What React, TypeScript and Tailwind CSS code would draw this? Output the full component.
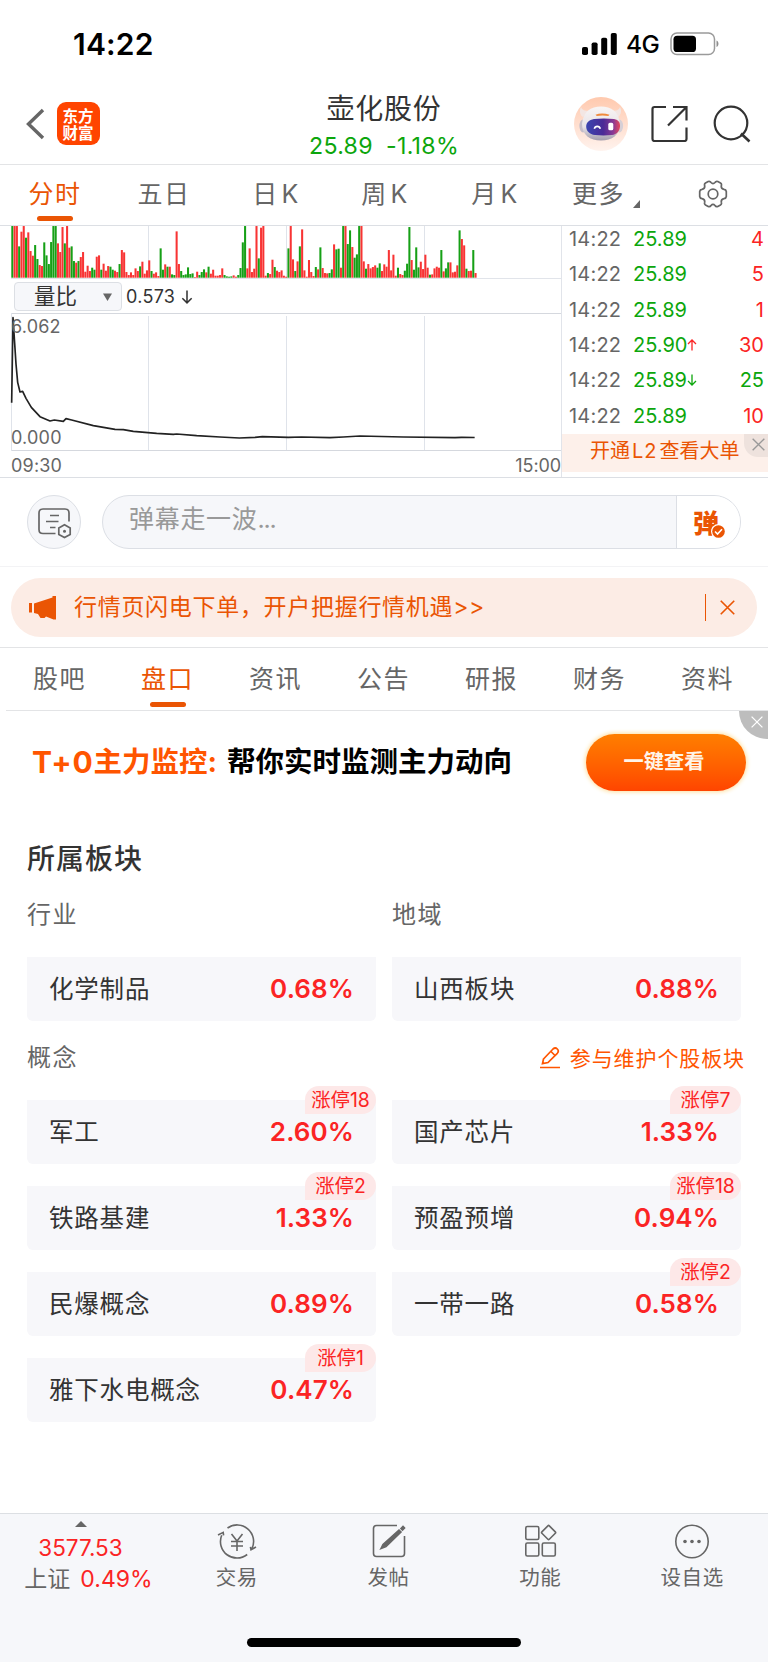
import { ReactNode } from "react";
import clsx from "clsx";

// minute volume bars: positive = up (red), negative = down (green)
const VOLUME = [
  -155, 155, 155, -94, 138, 155, -120, 136, 80, 66, -98, -56, 38, 35, -106, -67, -41, -107, -155, -155,
  103, 77, 152, -103, 155, 90, -94, -50, 45, -50, 62, 77, 18, 36, 20, -30, -24, 63, 67, -24,
  42, 21, 35, -33, -24, 21, 17, -41, 83, 76, 17, 8, 16, 8, 28, 20, -34, 48, 12, 22,
  52, -20, 12, 16, 5, -88, -24, 40, -33, 33, -10, -8, 139, 41, -20, -8, -10, -31, -11, -13,
  2, 18, -8, -17, -25, 16, -33, 12, 24, 6, 6, 8, 28, -8, -4, -3, -4, 7, 3, -8,
  -29, -106, -155, 28, 88, 17, 27, 155, -58, 150, 155, 6, -14, 11, 54, -32, 21, 17, 22, 6,
  3, -88, 155, 55, -20, 49, -94, 145, 22, 3, 53, 17, 5, -32, 25, -91, 29, 14, 13, -14,
  -25, 100, -85, -87, 30, -155, 155, -101, -142, 92, -60, -70, -155, 155, 49, -27, 41, 28, 32, 37,
  -30, -43, 20, 40, 33, 83, 22, 69, 6, -30, 11, 8, -21, -42, -152, 53, -24, -91, -31, 48,
  26, 69, 30, -9, 10, 28, 33, 30, -83, 19, -28, -46, 46, 16, 18, 37, -142, 116, 97, -27,
  20, 21, -83, 14,
];

const RATIO_LINE =
  "35,548 39,293 44,370 48,432 53,487 60,516 68,514 78,535 94,562 120,590 150,603 163,600 190,604 198,596 215,600 280,617 345,628 370,629 400,634 470,640 520,643 530,642 590,647 660,651 718,654 765,652 787,650 865,652 905,651 990,653 1030,651 1080,648 1210,651 1365,653 1385,652 1424,652.5";

const TRADES = [
  { price: "25.89", vol: "4", up: true },
  { price: "25.89", vol: "5", up: true },
  { price: "25.89", vol: "1", up: true },
  { price: "25.90", dir: "up", vol: "30", up: true },
  { price: "25.89", dir: "down", vol: "25", up: false },
  { price: "25.89", vol: "10", up: true },
];

const CONCEPTS = [
  { name: "军工", value: "2.60%", tag: "涨停18" },
  { name: "国产芯片", value: "1.33%", tag: "涨停7" },
  { name: "铁路基建", value: "1.33%", tag: "涨停2" },
  { name: "预盈预增", value: "0.94%", tag: "涨停18" },
  { name: "民爆概念", value: "0.89%" },
  { name: "一带一路", value: "0.58%", tag: "涨停2" },
  { name: "雅下水电概念", value: "0.47%", tag: "涨停1" },
];

const INFO_TABS = ["股吧", "盘口", "资讯", "公告", "研报", "财务", "资料"];

function Arrow({ up, className }: { up?: boolean; className?: string }) {
  return (
    <svg viewBox="0 0 10 12" fill="none" stroke="currentColor" strokeWidth="1.3" className={className}>
      {up ? <path d="M5 11.5V1M1 5l4-4 4 4" /> : <path d="M5 .5V11M1 7l4 4 4-4" />}
    </svg>
  );
}

function Cross({ className, width = 1.5 }: { className?: string; width?: number }) {
  return (
    <svg viewBox="0 0 14 14" fill="none" stroke="currentColor" strokeWidth={width} className={className}>
      <path d="M.7.7l12.6 12.6M13.3.7L.7 13.3" />
    </svg>
  );
}

function StatusBar() {
  return (
    <div className="flex h-[84px] items-center justify-between pl-[73px] pr-[48px] pt-[4px] text-black">
      <span className="text-[30px] font-semibold leading-none tracking-[0.2px]">14:22</span>
      <div className="flex items-center">
        <svg width="36" height="22" viewBox="0 0 36 22">
          <rect x="0" y="14" width="6" height="8" rx="1.8" />
          <rect x="9.6" y="9.5" width="6" height="12.5" rx="1.8" />
          <rect x="19.2" y="4.8" width="6" height="17.2" rx="1.8" />
          <rect x="28.8" y="0" width="6" height="22" rx="1.8" />
        </svg>
        <span className="ml-[8px] w-[37px] text-[24.5px] font-medium leading-none tracking-[-0.5px]">4G</span>
        <svg width="50" height="24" viewBox="0 0 50 24" className="ml-[7px]">
          <rect x="1" y="1" width="43.5" height="21.5" rx="6" fill="none" stroke="#9a9a9a" strokeWidth="1.5" />
          <rect x="3.5" y="3.7" width="22.5" height="16.3" rx="3.6" />
          <path d="M46.5 8.5c2.6.8 2.6 5.6 0 6.4z" fill="#8e8e8e" />
        </svg>
      </div>
    </div>
  );
}

function Robot() {
  return (
    <svg width="54" height="54" viewBox="0 0 54 54">
      <defs>
        <linearGradient id="halo" x1="0" y1="0" x2="0" y2="1">
          <stop offset="0" stopColor="#ffc9ae" />
          <stop offset="1" stopColor="#fff3ee" />
        </linearGradient>
        <linearGradient id="shell" x1="0" y1="0" x2="0" y2="1">
          <stop offset="0" stopColor="#f8f5f5" />
          <stop offset=".6" stopColor="#e8e3e7" />
          <stop offset="1" stopColor="#a39dad" />
        </linearGradient>
        <linearGradient id="visor" x1="0" y1="0" x2="1" y2="0">
          <stop offset="0" stopColor="#3a45b0" />
          <stop offset=".5" stopColor="#4a2a96" />
          <stop offset=".8" stopColor="#8a3a94" />
          <stop offset="1" stopColor="#e8485a" />
        </linearGradient>
      </defs>
      <circle cx="27" cy="27" r="27" fill="url(#halo)" />
      <ellipse cx="9" cy="29" rx="3.6" ry="6.5" fill="#c4bdc9" />
      <ellipse cx="45.5" cy="29" rx="3.6" ry="6.5" fill="#d6cfd6" />
      <path d="M7 10c-2 4-1 8 2 10l6-6c-4 0-7-1-8-4zM46 10c2 4 1 8-2 10l-6-6c4 0 7-1 8-4z" fill="#f3e6e3" />
      <path d="M27 9.5c10 0 18 5 19 17.5 0 11-8 16.500-19 16.500S8 38 8 27C9 14.500 17 9.500 27 9.500z" fill="url(#shell)" />
      <path d="M21.500 17.800c4-1.600 9-1.600 14 0l-1.200 1.300c-3.500-.8-8-.8-11.500 0z" fill="#f08a3c" />
      <path d="M20 22c6-.8 14-.8 20 0 5 1 6.300 4 6 7.500-.4 4.800-3 7.800-8 8.500-5 .6-12 .6-17 0-5.500-.7-8.500-3.800-8.800-8C12 25.500 15 22.900 20 22z" fill="url(#visor)" />
      <path d="M20.300 31.800c.8-3.200 5.200-3.200 6 0" fill="none" stroke="#fff" strokeWidth="1.6" />
      <rect x="34.3" y="25.8" width="5" height="7.5" rx="1.6" fill="#fff" />
    </svg>
  );
}

function Header() {
  return (
    <div className="relative flex h-[81px] items-center justify-between border-b border-[#e3e4e6]">
      <div className="flex items-center pb-px pl-[26px]">
        <svg width="19" height="32" viewBox="0 0 19 32" fill="none" stroke="#666" strokeWidth="3.4">
          <path d="M17 2L2.500 16 17 30" />
        </svg>
        <div className="ml-[12px] flex h-[43px] w-[43px] items-center justify-center rounded-[9px] bg-[#ff4400]">
          <span className="w-[32px] break-all font-['Noto_Sans_CJK_SC'] text-[15.5px] font-bold leading-[17px] text-white">东方财富</span>
        </div>
      </div>
      <div className="absolute inset-x-0 top-[9px] flex flex-col items-center">
        <div className="text-[28px] leading-[32px] tracking-[0.8px] text-[#333]">壶化股份</div>
        <div className="mt-[9px] flex gap-[13px] text-[23.2px] leading-[24px] tracking-[0.3px] text-[#0ca60c]">
          <span>25.89</span>
          <span>-1.18%</span>
        </div>
      </div>
      <div className="flex items-center pb-px pr-[17px]">
        <Robot />
        <svg width="37" height="37" viewBox="0 0 37 37" fill="none" stroke="#333" strokeWidth="2.2" className="ml-[23px]">
          <path d="M15 2H3.500Q1.500 2 1.500 4v30q0 2 2 2h30q2 0 2-2V22.500M22 2h13.500v13.500M35 2.500L17 20.500" />
        </svg>
        <svg width="38" height="38" viewBox="0 0 38 38" fill="none" stroke="#333" strokeWidth="2.2" className="ml-[25px]">
          <circle cx="18" cy="18" r="16.3" />
          <path d="M28 28.500l8.500 8" strokeWidth="2.6" />
        </svg>
      </div>
    </div>
  );
}

function PeriodTab({ width, active, children }: { width: string; active?: boolean; children: ReactNode }) {
  return (
    <div className={clsx("relative flex items-center justify-center pb-px", width, active && "text-[#ea5504]")}>
      {children}
      {active && <div className="absolute bottom-[4px] left-1/2 h-[5px] w-[36px] -translate-x-1/2 rounded-full bg-[#ea5504]" />}
    </div>
  );
}

function PeriodTabs() {
  return (
    <div className="flex h-[60px] whitespace-nowrap text-[25px] tracking-[1.4px] text-[#666]">
      <PeriodTab width="w-[110px]" active>分时</PeriodTab>
      <PeriodTab width="w-[108px]">五日</PeriodTab>
      <PeriodTab width="w-[116px]">日<span className="ml-[3px]">K</span></PeriodTab>
      <PeriodTab width="w-[102px]">周<span className="ml-[3px]">K</span></PeriodTab>
      <PeriodTab width="w-[118px]">月<span className="ml-[3px]">K</span></PeriodTab>
      <PeriodTab width="w-[104px]">
        更多
        <svg width="7" height="8" viewBox="0 0 7 8" className="ml-[8px] mt-[18px]">
          <path d="M7 0v8H0z" fill="#666" />
        </svg>
      </PeriodTab>
      <div className="flex flex-1 items-center justify-center pb-[3px]">
        <svg width="30" height="28" viewBox="0 0 30 28" fill="none" stroke="#666" strokeWidth="1.7" strokeLinejoin="round">
          <path d="M10.200 1.500Q12 .8 13 2.500 15 4.600 17 2.500 18 .8 19.800 1.500L22.500 3Q24 4 23.300 5.800 23 8.800 26 9.300 28 9.500 28.300 11.500V16.500Q28 18.500 26 18.700 23 19.200 23.300 22.200 24 24 22.500 25L19.800 26.500Q18 27.200 17 25.500 15 23.400 13 25.500 12 27.200 10.200 26.500L7.500 25Q6 24 6.700 22.200 7 19.200 4 18.700 2 18.500 1.700 16.500V11.500Q2 9.500 4 9.300 7 8.800 6.700 5.800 6 4 7.500 3Z" />
          <circle cx="15" cy="14" r="4.8" />
        </svg>
      </div>
    </div>
  );
}

function Charts() {
  return (
    <div className="flex w-[562px] shrink-0 flex-col border-r border-[#e1e4ea]">
      <svg width="561" height="53" viewBox="0 0 561 53" className="block shrink-0">
        <path d="M148.500 0v53M286.500 0v53M424.500 0v53" stroke="#dfe3ea" />
        {VOLUME.map((v, i) => (
          <rect
            key={i}
            x={11.3 + i * 2.282}
            y={51.7 - Math.abs(v) / 3}
            width="2.05"
            height={Math.abs(v) / 3}
            fill={v > 0 ? "#f83434" : "#16a016"}
          />
        ))}
        <path d="M11 52.500h550" stroke="#e1e4ea" />
      </svg>
      <div className="flex h-[34px] shrink-0 items-center pl-[14px] pt-px text-[#333]">
        <div className="flex h-[29px] w-[108px] items-center justify-between rounded-[4px] border border-[#dcdfe4] bg-[#f6f7fa] pl-[19px] pr-[9px]">
          <span className="text-[21.5px] leading-none">量比</span>
          <svg width="9" height="8" viewBox="0 0 9 8">
            <path d="M0 .5h9L4.500 8z" fill="#666" />
          </svg>
        </div>
        <span className="ml-[4px] text-[18px] leading-none tracking-[0.3px]">0.573</span>
        <Arrow className="ml-[6px] h-[14px] w-[12px]" />
      </div>
      <div className="relative h-[139px] shrink-0">
        <svg width="561" height="139" viewBox="0 0 561 139" className="block" fill="none">
          <path d="M11 .5h550M11 137.500h550" stroke="#d5d8de" />
          <path d="M11.500 0v138M148.500 3v134M286.500 3v134M424.500 3v134" stroke="#dfe3ea" />
          <polyline points={RATIO_LINE} transform="translate(0 -93) scale(.33333)" stroke="#222" strokeWidth="5" strokeLinejoin="round" />
        </svg>
        <span className="absolute left-[11px] top-[4px] text-[18px] leading-[20px] tracking-[0.2px] text-[#666]">6.062</span>
        <span className="absolute left-[11px] top-[115px] text-[18px] leading-[20px] tracking-[0.2px] text-[#666]">0.000</span>
      </div>
      <div className="flex h-[25px] items-center justify-between pl-[11px] pt-[2px] text-[18px] leading-none tracking-[0.2px] text-[#666]">
        <span>09:30</span>
        <span className="tracking-[-0.1px]">15:00</span>
      </div>
    </div>
  );
}

function TradeList() {
  return (
    <div className="flex flex-1 flex-col">
      <div className="h-[208px] overflow-hidden pl-[7px] pr-[4px]">
        {TRADES.map((t, i) => (
          <div key={i} className="flex h-[35.3px] items-center pb-[9px] text-[20px] leading-none text-[#0ca60c]">
            <span className="w-[64px] tracking-[0.2px] text-[#666]">14:22</span>
            <span className="w-[54px]">{t.price}</span>
            {t.dir && <Arrow up={t.dir === "up"} className={clsx("h-[12px] w-[10px]", t.dir === "up" && "text-[#fb2424]")} />}
            <span className={clsx("ml-auto", t.up && "text-[#fb2424]")}>{t.vol}</span>
          </div>
        ))}
      </div>
      <div className="relative h-[38px] bg-[#fdf0ea] pl-[28px] text-[20px] leading-[34px] text-[#ea5504]">
        开通<span className="mx-[2px] tracking-[1px]">L2</span>查看大单
        <div className="absolute right-0 top-0 flex h-[23px] w-[24px] items-center justify-center rounded-bl-[14px] bg-[#eee2dd] pb-[3px] pl-[4px]">
          <Cross className="h-[13px] w-[13px] text-[#999]" />
        </div>
      </div>
    </div>
  );
}

function DanmuBar() {
  return (
    <div className="flex h-[89px] items-center border-b border-[#f3f3f5] pl-[27px] pr-[27px]">
      <div className="flex h-[54px] w-[54px] items-center justify-center rounded-full border border-[#dcdfe5] bg-[#f6f7fa]">
        <svg width="34" height="31" viewBox="0 0 34 31" fill="none" stroke="#666" strokeWidth="1.7" className="ml-[2px] mt-[3px]">
          <path d="M17.500 25.500H5Q1 25.500 1 21.500V5Q1 1 5 1H27Q31 1 31 5V13.500M12 7.500h9M8 13.500h12.500M12 19.500h5.500" />
          <path d="M26.500 16.800l5.700 3.200v6.400l-5.700 3.200-5.700-3.200V20z" />
          <circle cx="26.5" cy="23.2" r="1.5" fill="#666" stroke="none" />
        </svg>
      </div>
      <div className="ml-[21px] flex h-[54px] flex-1 overflow-hidden rounded-full border border-[#dcdfe5] bg-[#f6f7fa]">
        <span className="flex-1 pl-[26px] text-[25px] leading-[47px] tracking-[0.7px] text-[#999]">
          弹幕走一波<span className="tracking-[-1.2px]">...</span>
        </span>
        <div className="relative flex w-[64px] items-center border-l border-[#dcdfe5] bg-white pl-[16px]">
          <span className="font-['Noto_Sans_CJK_SC'] text-[26px] font-black leading-none text-[#ea5504]">弹</span>
          <svg width="15" height="15" viewBox="0 0 15 15" className="absolute left-[34px] top-[28px]">
            <circle cx="7.5" cy="7.5" r="7.5" fill="#fff" />
            <circle cx="7.5" cy="7.5" r="6.3" fill="#ea5504" />
            <path d="M4 7.500l2.500 2.600L11 5.300" fill="none" stroke="#fff" strokeWidth="1.6" />
          </svg>
        </div>
      </div>
    </div>
  );
}

function NoticeBar() {
  return (
    <div className="h-[81px] border-b border-[#e3e4e6] pl-[11px] pr-[11px] pt-[11px]">
      <div className="flex h-[59px] items-center rounded-full bg-[#fcece5] pl-[18px] pr-[22px] text-[#ea5504]">
        <svg width="27" height="24" viewBox="0 0 27 24" fill="currentColor">
          <path d="M0 7h3v9.500H0zM5 7.500L23.500 1.500V0H27v23.500h-2.500L17 20.500l-1.500 1.500h-4L9 18 5 17z" />
        </svg>
        <span className="ml-[18px] whitespace-nowrap text-[23px] leading-none tracking-[0.7px]">行情页闪电下单，开户把握行情机遇&gt;&gt;</span>
        <div className="ml-auto h-[27px] w-px bg-[#ea5504]" />
        <Cross className="ml-[14px] h-[15px] w-[15px]" />
      </div>
    </div>
  );
}

function InfoTabs() {
  return (
    <div className="ml-[6px] grid h-[63px] grid-cols-[repeat(7,108px)] border-b border-[#e3e4e6] text-[25px] tracking-[1.4px] text-[#666]">
      {INFO_TABS.map((label) => (
        <div key={label} className={clsx("relative flex items-center justify-center pr-px pt-[2px]", label === "盘口" && "text-[#ea5504]")}>
          {label}
          {label === "盘口" && (
            <div className="absolute bottom-[3px] left-1/2 h-[5px] w-[36px] -translate-x-1/2 rounded-full bg-[#ea5504]" />
          )}
        </div>
      ))}
    </div>
  );
}

function PromoBar() {
  return (
    <div className="relative flex h-[102px] items-center justify-between pl-[32px] pr-[22px]">
      <div className="flex items-center whitespace-nowrap text-[28.5px] font-bold leading-none text-black">
        <span className="text-[30px] tracking-[0.8px] text-[#ff5500]">T+0</span>
        <span className="text-[#ff5500]">主力监控:</span>
        <span className="ml-[10px]">帮你实时监测主力动向</span>
      </div>
      <div className="flex h-[57px] w-[160px] items-center justify-center rounded-full bg-linear-to-b from-[#ff7e00] to-[#ff4400] pr-[4px] text-[20.2px] font-bold text-[#fff4e8] shadow-[0_0_4px_1px_#ffdf9e]">
        一键查看
      </div>
      <div className="absolute right-0 top-0 flex h-[28px] w-[29px] items-center justify-center rounded-bl-full bg-[#bdbdbd] pb-[6px] pl-[7px]">
        <Cross className="h-[12px] w-[12px] text-white" />
      </div>
    </div>
  );
}

function BoardCard({ name, value, tag }: { name: string; value: string; tag?: string }) {
  return (
    <div className="relative flex h-[64px] items-center justify-between rounded-b-[6px] bg-[#f7f7fa] pl-[22px] pr-[22px]">
      <span className="text-[24.5px] leading-none tracking-[0.8px] text-[#333]">{name}</span>
      <span className="text-[26px] font-semibold leading-none tracking-[0.1px] text-[#fb2424]">{value}</span>
      {tag && (
        <div className="absolute right-0 top-[-14px] h-[28px] w-[71px] rounded-t-[14px] rounded-br-[14px] bg-[#fde8e8] text-center text-[19.4px] leading-[28px] text-[#fb2424]">
          {tag}
        </div>
      )}
    </div>
  );
}

function Boards() {
  return (
    <div className="h-[700px] pl-[27px] pr-[27px] pt-[30px]">
      <h2 className="text-[28px] font-medium leading-[32px] tracking-[1px] text-[#333]">所属板块</h2>
      <div className="mt-[24px] grid grid-cols-2 gap-x-[16px] text-[24px] leading-[32px] tracking-[1.5px] text-[#666]">
        <span>行业</span>
        <span>地域</span>
      </div>
      <div className="mt-[26px] grid grid-cols-2 gap-x-[16px]">
        <BoardCard name="化学制品" value="0.68%" />
        <BoardCard name="山西板块" value="0.88%" />
      </div>
      <div className="mr-[-4px] mt-[21px] flex h-[32px] items-center leading-none text-[#666]">
        <span className="text-[24px] tracking-[1.5px]">概念</span>
        <svg width="20" height="22" viewBox="0 0 20 22" fill="none" stroke="#ff5500" strokeWidth="1.7" className="ml-auto">
          <path d="M0 20.500h20M3.500 12L13 2q2.300-2 4.300 0t0 4.300L8 15.500l-5.500 1.200zM11 4.500l4 4" />
        </svg>
        <span className="ml-[10px] text-[21px] tracking-[0.9px] text-[#ff5500]">参与维护个股板块</span>
      </div>
      <div className="mt-[26px] grid grid-cols-2 gap-x-[16px] gap-y-[22px]">
        {CONCEPTS.map((c) => (
          <BoardCard key={c.name} {...c} />
        ))}
      </div>
    </div>
  );
}

function NavItem({ label, children }: { label: string; children: ReactNode }) {
  return (
    <div className="flex flex-1 flex-col items-center pt-[9px] text-[#666]">
      <svg width="40" height="36" viewBox="0 0 40 36" fill="none" stroke="currentColor" strokeWidth="1.6">
        {children}
      </svg>
      <span className="mt-[7px] text-[20.5px] leading-[24px] tracking-[0.6px]">{label}</span>
    </div>
  );
}

function BottomNav() {
  return (
    <div className="relative flex h-[149px] border-t border-[#dcdfe3] bg-[#f6f7fa]">
      <div className="flex w-[161px] flex-col items-center pt-[7px] text-[#fb2424]">
        <svg width="12" height="6" viewBox="0 0 12 6">
          <path d="M6 0l6 6H0z" fill="#666" />
        </svg>
        <span className="mt-[10px] text-[22.5px] leading-[22px]">3577.53</span>
        <div className="ml-[16px] mt-[8px] flex items-center gap-[10px] text-[23px] leading-[24px]">
          <span className="text-[#666]">上证</span>
          <span>0.49%</span>
        </div>
      </div>
      <NavItem label="交易">
        <path d="M10.500 5A16.500 16.500 0 0 1 35 25.500M30.200 31.500A16.500 16.500 0 0 1 4.700 12.300M1 12l5.200-2.600.4 3M39 24l-5 2.800-.600-3" />
        <path d="M14.500 11l5.500 7 5.500-7M20 18v10M14 18.500h12M14 23h12" />
      </NavItem>
      <NavItem label="发帖">
        <path d="M28 2.500H7.500q-3 0-3 3v25q0 3 3 3h25q3 0 3-3V13" />
        <path d="M12 25.500l2-4L30 7l2 2-15 14.500zM32 5.500l2-2 1.500 1.500-2 2z" fill="currentColor" />
      </NavItem>
      <NavItem label="功能">
        <g transform="translate(1.300 0)">
          <rect x="4.5" y="3.5" width="13" height="13" rx="1.5" />
          <rect x="4.5" y="20" width="13" height="13" rx="1.5" />
          <rect x="21" y="20" width="13" height="13" rx="1.5" />
          <rect x="22" y="4.3" width="10.5" height="10.5" rx="1" transform="rotate(45 27.3 9.6)" />
        </g>
      </NavItem>
      <NavItem label="设自选">
        <circle cx="20" cy="18.5" r="16.2" />
        <g fill="currentColor" stroke="none">
          <circle cx="13" cy="18.5" r="1.8" />
          <circle cx="20" cy="18.5" r="1.8" />
          <circle cx="27" cy="18.5" r="1.8" />
        </g>
      </NavItem>
      <div className="absolute bottom-[15px] left-[247px] h-[9px] w-[274px] rounded-full bg-black" />
    </div>
  );
}

export default function App() {
  return (
    <div className="flex h-[1662px] w-[768px] flex-col overflow-hidden bg-white font-['Inter','Noto_Sans_CJK_SC',sans-serif]">
      <StatusBar />
      <Header />
      <PeriodTabs />
      <div className="flex h-[253px] border-y border-[#dcdfe4]">
        <Charts />
        <TradeList />
      </div>
      <DanmuBar />
      <NoticeBar />
      <InfoTabs />
      <PromoBar />
      <Boards />
      <BottomNav />
    </div>
  );
}
